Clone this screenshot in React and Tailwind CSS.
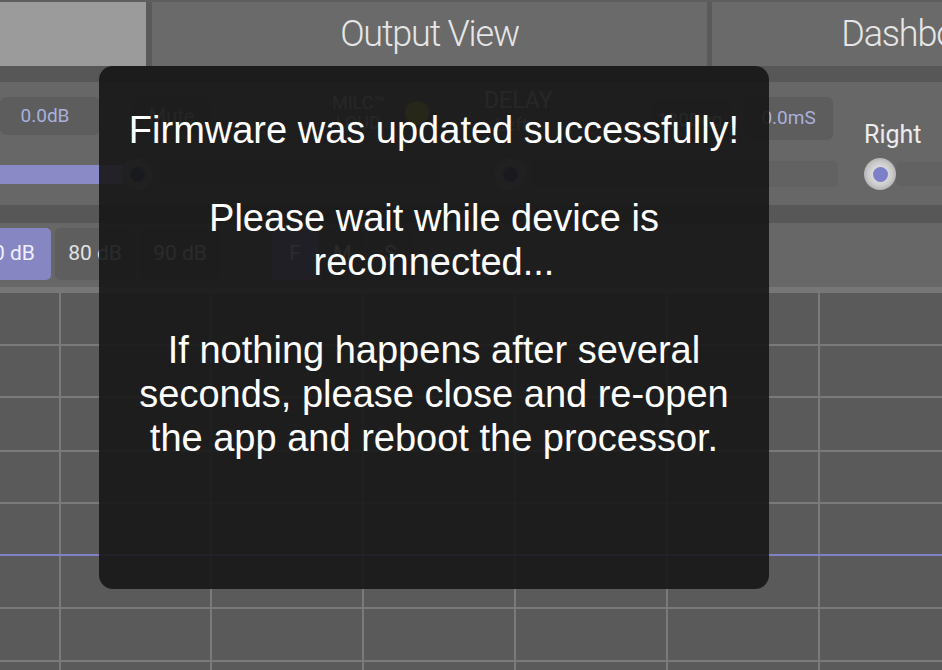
import React from 'react';

const gridX = [60, 211, 363, 515, 667, 819];
const gridY = [58, 110, 164, 216, 321, 374];

function Knob({ light }) {
  return (
    <div
      className={
        light
          ? 'w-[32px] h-[32px] shrink-0 rounded-full flex items-center justify-center bg-[radial-gradient(circle_at_50%_50%,#f2f2f2_0%,#c9c9c9_55%,#8e8e8e_100%)]'
          : 'w-[32px] h-[32px] shrink-0 rounded-full flex items-center justify-center bg-[#7a7a7a]'
      }
    >
      <div className={light ? 'w-[15px] h-[15px] rounded-full bg-[#7b80c9]' : 'w-[15px] h-[15px] rounded-full bg-[#3b4170]'} />
    </div>
  );
}

function ValueBox({ children, className }) {
  return (
    <div className={`h-[40px] shrink-0 rounded-[6px] bg-[#5d5d5d] flex items-center justify-center whitespace-nowrap text-[19px] text-[#a9b0dc] ${className}`}>
      {children}
    </div>
  );
}

function Toggle({ children, active, className }) {
  return (
    <div
      className={`h-[52px] shrink-0 rounded-[5px] flex items-center justify-center whitespace-nowrap text-[21px] ${
        active ? 'bg-[#8686c3] text-[#eeeeff]' : 'bg-[#5e5e5e] text-[#e2e2e2]'
      } ${className}`}
    >
      {children}
    </div>
  );
}

export default function App() {
  return (
    <div className="relative w-[942px] h-[670px] overflow-hidden bg-[#5a5a5a] font-['Roboto','Open_Sans',sans-serif]">
      {/* tabs */}
      <div className="flex h-[66px] border-t-2 border-[#5e5e5e] bg-[#5a5a5a]">
        <div className="w-[146px] shrink-0 bg-[#9b9b9b]" />
        <div className="ml-[6px] w-[555px] shrink-0 bg-[#6a6a6a] flex items-center justify-center text-[36px] font-light tracking-[-1.2px] text-[#e6e6e6]">
          Output View
        </div>
        <div className="ml-[5px] w-[420px] shrink-0 bg-[#6a6a6a] flex items-center justify-center text-[36px] font-light tracking-[-1.2px] text-[#e6e6e6]">
          Dashboard
        </div>
      </div>

      <div className="h-[16px] bg-[#575757]" />

      {/* channel strip */}
      <div className="flex h-[123px] bg-[#676767]">
        <div className="w-[466px] shrink-0 flex flex-col">
          <div className="flex items-start h-[76px] pt-[15px]">
            <ValueBox className="w-[100px] !h-[38px] pr-[10px]">0.0dB</ValueBox>
            <div className="ml-[33px] w-[77px] h-[38px] rounded-[5px] bg-[#5d5d5d] flex items-center justify-center text-[20px] text-[#a8a8a8]">
              Mute
            </div>
            <div className="ml-[122px] -mt-[4px] flex flex-col items-center leading-[20px] text-[18px] text-[#bdbdbd]">
              <span>MILC™</span>
              <span>LOUD</span>
            </div>
            <div className="ml-[20px] mt-[4px] w-[24px] h-[24px] rounded-full bg-[#b8b43a]" />
          </div>
          <div className="flex items-center h-[32px]">
            <div className="w-[125px] h-[19px] bg-[#8a8ac6]" />
            <div className="-ml-[4px]">
              <Knob />
            </div>
            <div className="ml-[8px] w-[280px] h-[24px] rounded-[5px] bg-[#626262]" />
          </div>
        </div>

        <div className="ml-[12px] w-[370px] shrink-0 flex flex-col">
          <div className="flex items-start h-[76px] pl-[6px] pt-[6px]">
            <div className="flex flex-col">
              <span className="text-[23px] leading-[26px] text-[#bdbdbd]">DELAY</span>
              <span className="ml-[11px] text-[19px] leading-[22px] text-[#bdbdbd]">Left</span>
            </div>
            <ValueBox className="ml-[97px] mt-[12px] w-[80px] text-[#bdbdbd]">180Deg</ValueBox>
            <ValueBox className="ml-[15px] mt-[9px] w-[88px] !h-[43px]">0.0mS</ValueBox>
          </div>
          <div className="flex items-center h-[32px]">
            <div className="ml-[16px]">
              <Knob />
            </div>
            <div className="ml-[4px] w-[308px] h-[26px] rounded-[5px] bg-[#626262]" />
          </div>
        </div>

        <div className="flex flex-col pl-[16px]">
          <div className="h-[76px] pt-[38px]">
            <span className="block text-[25px] leading-[30px] text-[#ececec]">Right</span>
          </div>
          <div className="flex items-center h-[32px]">
            <Knob light />
            <div className="w-[60px] h-[24px] rounded-[5px] bg-[#626262]" />
          </div>
        </div>
      </div>

      <div className="h-[18px] bg-[#575757]" />

      {/* level / mode buttons */}
      <div className="flex h-[64px] pt-[5px] bg-[#676767]">
        <Toggle active className="w-[86px] -ml-[35px]">70 dB</Toggle>
        <Toggle className="ml-[4px] w-[80px]">80 dB</Toggle>
        <Toggle className="ml-[5px] w-[80px] text-[#c4c4c4]">90 dB</Toggle>
        <Toggle active className="ml-[52px] w-[46px] !bg-[#6d6da8]">F</Toggle>
        <Toggle className="ml-[2px] w-[45px]">M</Toggle>
        <Toggle className="ml-[3px] w-[45px]">S</Toggle>
      </div>

      {/* graph */}
      <svg width="942" height="383" className="block">
        <rect x="0" y="0" width="942" height="383" fill="#5a5a5a" />
        <rect x="0" y="0" width="942" height="6" fill="#777777" />
        {gridX.map((x) => (
          <line key={x} x1={x} y1="6" x2={x} y2="383" stroke="#7a7a7a" strokeWidth="2" />
        ))}
        {gridY.map((y) => (
          <line key={y} x1="0" y1={y} x2="942" y2={y} stroke="#7a7a7a" strokeWidth="2" />
        ))}
        <line x1="0" y1="268" x2="942" y2="268" stroke="#8080c4" strokeWidth="2" />
      </svg>

      {/* firmware dialog */}
      <div className="absolute left-[99px] top-[66px] w-[670px] h-[523px] rounded-[14px] bg-[rgba(22,22,22,0.9)] px-[24px] pt-[42px] text-center text-white text-[38px] leading-[44px] font-['Liberation_Sans','Arial',sans-serif]">
        <p>Firmware was updated successfully!</p>
        <p className="mt-[44px]">Please wait while device is reconnected...</p>
        <p className="mt-[44px]">If nothing happens after several seconds, please close and re-open the app and reboot the processor.</p>
      </div>
    </div>
  );
}
